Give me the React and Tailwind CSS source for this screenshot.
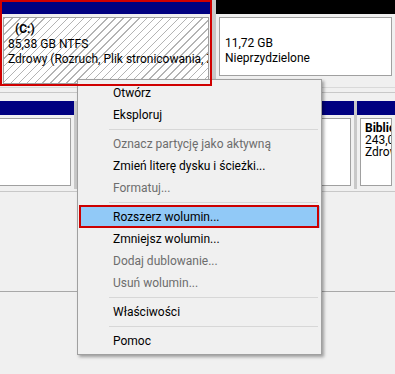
import React from "react";

const items = [
  { label: "Otwórz" },
  { label: "Eksploruj" },
  { sep: true },
  { label: "Oznacz partycję jako aktywną", disabled: true },
  { label: "Zmień literę dysku i ścieżki..." },
  { label: "Formatuj...", disabled: true },
  { sep: true },
  { label: "Rozszerz wolumin...", active: true },
  { label: "Zmniejsz wolumin..." },
  { label: "Dodaj dublowanie...", disabled: true },
  { label: "Usuń wolumin...", disabled: true },
  { sep: true },
  { label: "Właściwości" },
  { sep: true },
  { label: "Pomoc" },
];

const Partition = ({ header, className = "", hatched, children }) => (
  <div className={`flex flex-col min-w-0 ${className}`}>
    <div className={`h-[14px] shrink-0 ${header}`}></div>
    <div className="flex-1 min-h-0 p-[3px] bg-[#f0f0f0]">
      <div
        className={`h-full border border-[#a0a0a0] overflow-hidden whitespace-nowrap px-[4px] pt-[4px] ${
          hatched
            ? "bg-[repeating-linear-gradient(135deg,#b4b4b4_0px,#b4b4b4_1px,#ffffff_1px,#ffffff_5.6px)]"
            : "bg-white"
        }`}
      >
        {children}
      </div>
    </div>
  </div>
);

export default function App() {
  return (
    <div className="relative w-[395px] h-[374px] overflow-hidden bg-[#f0f0f0] text-[12px] leading-[15px] text-black font-['Roboto',sans-serif]">
      {/* Disk 0 */}
      <div className="flex h-[88px] border-b border-[#d9d9d9]">
        <Partition header="bg-[#000080]" className="w-[212px]" hatched>
          <div className="pl-[7px] font-bold">(C:)</div>
          <div>85,38 GB NTFS</div>
          <div>Zdrowy (Rozruch, Plik stronicowania, Zrzut awaryjny)</div>
        </Partition>
        <div className="w-[4px] bg-[#c8c8c8]"></div>
        <Partition header="bg-black" className="flex-1 pb-[8px]">
          <div className="pt-[14px] pl-[1px]">11,72 GB</div>
          <div className="pl-[1px]">Nieprzydzielone</div>
        </Partition>
      </div>

      {/* Disk 1 */}
      <div className="mt-[4px] border-t border-[#c8c8c8] pt-[8px] h-[100px] border-b">
        <div className="flex h-[88px]">
          <Partition header="bg-[#000080]" className="w-[78px] -ml-[4px] shrink-0"></Partition>
          <div className="w-[3px] shrink-0 bg-[#c8c8c8]"></div>
          <Partition header="bg-[#000080]" className="w-[277px] shrink-0"></Partition>
          <div className="w-[3px] shrink-0 bg-[#c8c8c8]"></div>
          <Partition header="bg-[#000080]" className="flex-1">
            <div className="font-bold leading-[12px] -mt-[1px]">Biblioteka</div>
            <div className="leading-[12px]">243,07 GB NTFS</div>
            <div className="leading-[12px]">Zdrowy (Partycja podstawowa)</div>
          </Partition>
        </div>
      </div>

      {/* Disk 2 */}
      <div className="mt-[99px] border-t border-[#a8a8a8]"></div>

      {/* Context menu */}
      <div className="absolute left-[77px] top-[79px] w-[245px] bg-[#f0f0f0] border border-[#a0a0a0] py-[2px] px-[1px] shadow-[2px_2px_3px_rgba(0,0,0,0.35)]">
        {items.map((it, i) =>
          it.sep ? (
            <div key={i} className="h-[7px] flex items-center pl-[30px] pr-[2px]">
              <div className="h-px w-full bg-[#d7d7d7]"></div>
            </div>
          ) : (
            <div
              key={i}
              className={`relative h-[22px] flex items-center pl-[34px] ${
                it.active ? "bg-[#91c9f7]" : ""
              } ${it.disabled ? "text-[#6d6d6d]" : "text-black"}`}
            >
              {it.label}
              {it.active && (
                <div className="absolute left-0 right-[1px] top-[-1px] bottom-0 border-2 border-[#cc0000]"></div>
              )}
            </div>
          )
        )}
      </div>

      {/* Annotation frame */}
      <div className="absolute left-0 top-0 w-[212px] h-[86px] border-2 border-[#d00000] pointer-events-none"></div>
    </div>
  );
}
